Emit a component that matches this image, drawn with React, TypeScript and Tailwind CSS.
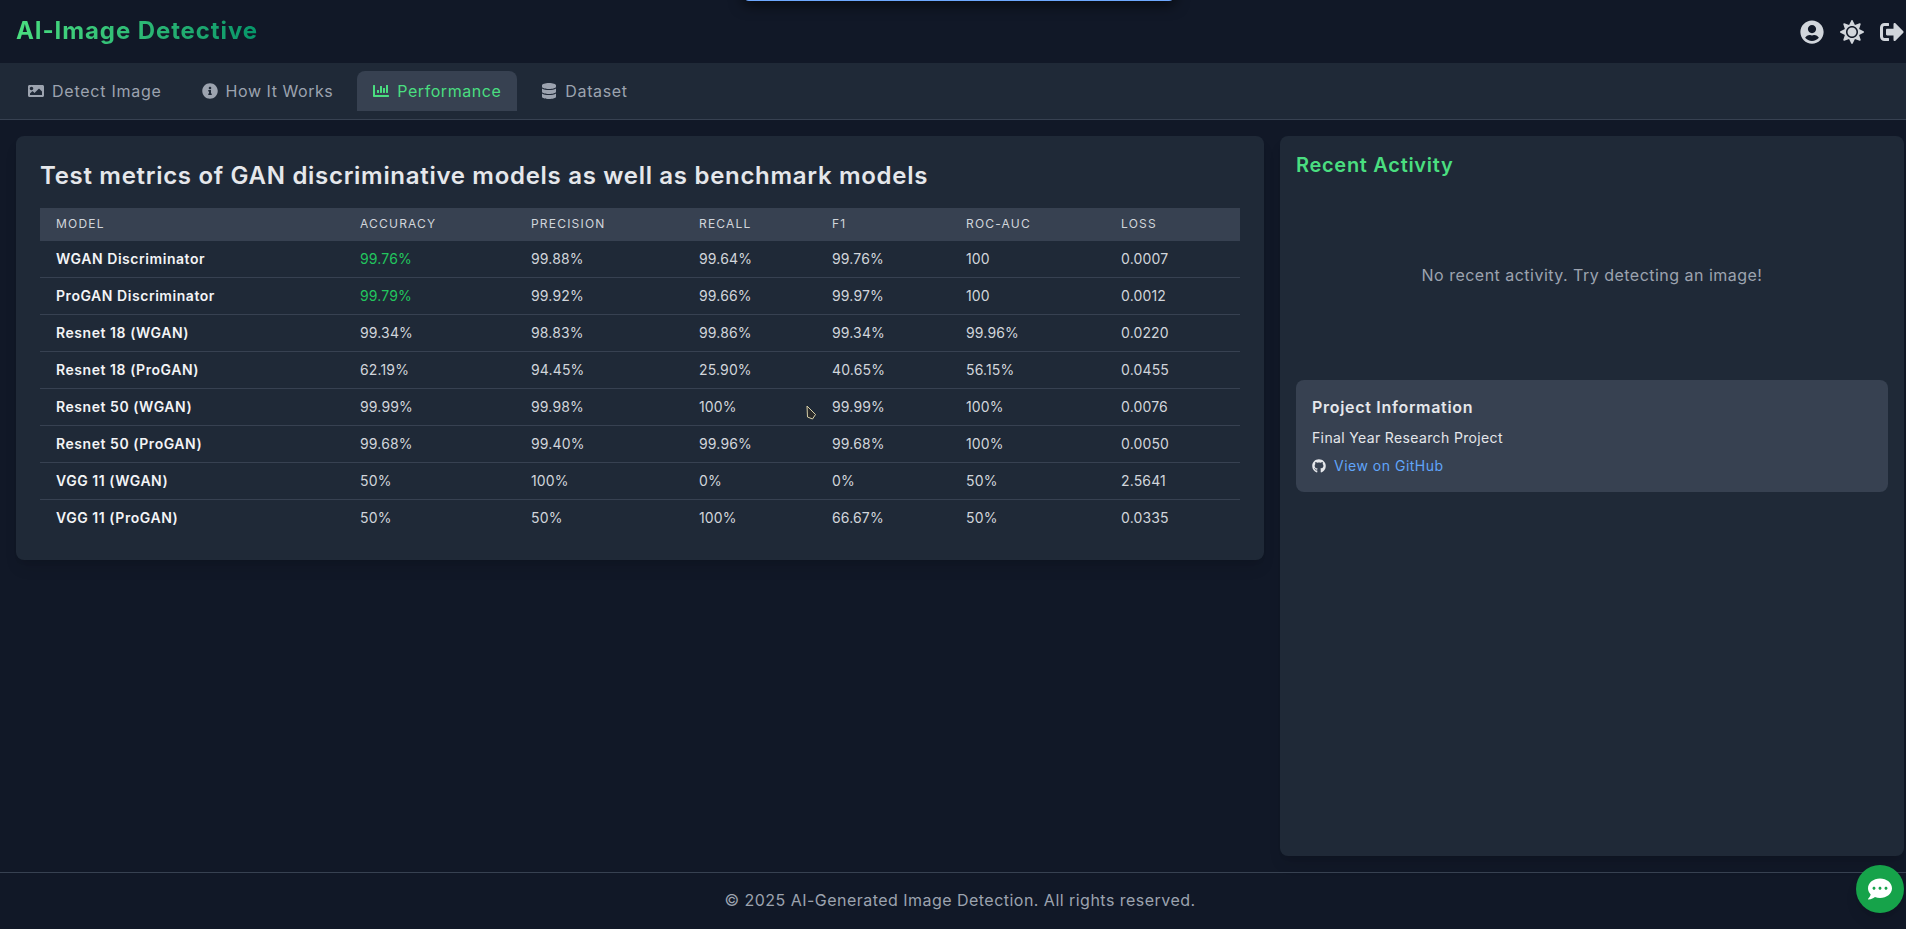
import { FaChartBar, FaCommentDots, FaDatabase, FaGithub, FaImage, FaInfoCircle, FaSignOutAlt, FaSun, FaUserCircle } from "react-icons/fa";

const columns = ["Model", "Accuracy", "Precision", "Recall", "F1", "ROC-AUC", "Loss"];

const rows = [
  ["WGAN Discriminator", "99.76%", "99.88%", "99.64%", "99.76%", "100", "0.0007"],
  ["ProGAN Discriminator", "99.79%", "99.92%", "99.66%", "99.97%", "100", "0.0012"],
  ["Resnet 18 (WGAN)", "99.34%", "98.83%", "99.86%", "99.34%", "99.96%", "0.0220"],
  ["Resnet 18 (ProGAN)", "62.19%", "94.45%", "25.90%", "40.65%", "56.15%", "0.0455"],
  ["Resnet 50 (WGAN)", "99.99%", "99.98%", "100%", "99.99%", "100%", "0.0076"],
  ["Resnet 50 (ProGAN)", "99.68%", "99.40%", "99.96%", "99.68%", "100%", "0.0050"],
  ["VGG 11 (WGAN)", "50%", "100%", "0%", "0%", "50%", "2.5641"],
  ["VGG 11 (ProGAN)", "50%", "50%", "100%", "66.67%", "50%", "0.0335"],
];

const tabs = [
  { name: "Detect Image", icon: FaImage, spacing: "tracking-[0.75px]" },
  { name: "How It Works", icon: FaInfoCircle, spacing: "tracking-[0.55px]" },
  { name: "Performance", icon: FaChartBar, spacing: "tracking-[0.55px]", active: true },
  { name: "Dataset", icon: FaDatabase, spacing: "tracking-[0.65px]" },
];

function MetricsTable() {
  return (
    <table className="w-[1200px] table-fixed border-collapse text-left">
      <colgroup>
        <col className="w-[304px]" />
        <col className="w-[171px]" />
        <col className="w-[168px]" />
        <col className="w-[133px]" />
        <col className="w-[134px]" />
        <col className="w-[155px]" />
        <col className="w-[135px]" />
      </colgroup>
      <thead>
        <tr className="border-b border-[#374151] bg-[#374151]">
          {columns.map((c) => (
            <th key={c} className="px-4 py-2 text-xs font-normal uppercase tracking-[1.2px] text-[#d1d5db]">
              {c}
            </th>
          ))}
        </tr>
      </thead>
      <tbody>
        {rows.map((row, r) => (
          <tr key={row[0]} className="border-b border-[#374151] last:border-b-0">
            {row.map((cell, i) => (
              <td
                key={i}
                className={
                  i === 0
                    ? "px-4 py-2 text-sm font-semibold tracking-[0.55px] text-[#f3f4f6]"
                    : i === 1 && r < 2
                      ? "px-4 py-2 text-sm tracking-[0.15px] text-[#22c55e]"
                      : "px-4 py-2 text-sm tracking-[0.15px] text-[#d1d5db]"
                }
              >
                {cell}
              </td>
            ))}
          </tr>
        ))}
      </tbody>
    </table>
  );
}

export default function App() {
  return (
    <div className="h-[929px] overflow-hidden bg-[#111827] font-['Inter',sans-serif]">
      <div className="relative flex h-full w-[1920px] flex-col">
        {/* toast sliding in at the top edge */}
        <div className="absolute left-[743px] top-[-40px] h-[41px] w-[432px] rounded-b-md border-b border-[#6ea8fe] bg-[#1f2937] shadow-[0_4px_14px_rgba(0,0,0,0.6)]" />

        <header className="flex h-[63px] items-center justify-between px-4 pb-[2px]">
          <h1 className="bg-gradient-to-r from-[#4ade80] to-[#059669] bg-clip-text text-2xl font-bold tracking-[0.9px] text-transparent">
            AI-Image Detective
          </h1>
          <div className="flex items-center gap-4 pt-[2px] text-[#d1d5db]">
            <FaUserCircle size={24} />
            <FaSun size={24} />
            <FaSignOutAlt size={24} />
          </div>
        </header>

        <nav className="flex gap-2 border-b border-[#374151] bg-[#1f2937] px-3 pb-2 pt-2">
          {tabs.map((t) => (
            <div
              key={t.name}
              className={`flex h-10 items-center gap-2 rounded-t-lg px-4 font-normal ${t.spacing} ${
                t.active ? "bg-[#374151] text-[#4ade80]" : "text-[#9ca3af]"
              }`}
            >
              <t.icon size={16} />
              {t.name}
            </div>
          ))}
        </nav>

        <main className="grid flex-1 grid-cols-[2fr_1fr] gap-4 p-4">
          <section className="self-start rounded-lg bg-[#1f2937] p-6 shadow-lg">
            <h2 className="mb-4 text-2xl font-semibold tracking-[0.7px] text-[#e5e7eb]">
              Test metrics of GAN discriminative models as well as benchmark models
            </h2>
            <MetricsTable />
          </section>

          <aside className="rounded-lg bg-[#1f2937] p-4 shadow-lg">
            <h2 className="mb-[18px] text-xl font-semibold leading-[26px] tracking-[0.7px] text-[#4ade80]">
              Recent Activity
            </h2>
            <p className="pb-[93px] pt-[67px] text-center tracking-[0.48px] text-[#9ca3af]">
              No recent activity. Try detecting an image!
            </p>
            <div className="rounded-lg bg-[#374151] p-4">
              <h3 className="mb-[10px] font-semibold leading-[22px] tracking-[0.7px] text-[#e5e7eb]">Project Information</h3>
              <p className="text-sm tracking-[0.36px] text-[#e5e7eb]">Final Year Research Project</p>
              <div className="mt-2 flex items-center gap-2 text-sm">
                <FaGithub size={14} className="text-[#e5e7eb]" />
                <span className="tracking-[0.5px] text-[#60a5fa]">View on GitHub</span>
              </div>
            </div>
          </aside>
        </main>

        <footer className="flex h-[57px] items-center justify-center border-t border-[#374151] pb-[2px] tracking-[0.47px] text-[#9ca3af]">
          © 2025 AI-Generated Image Detection. All rights reserved.
        </footer>

        <div className="absolute bottom-4 right-4 flex h-12 w-12 items-center justify-center rounded-full bg-[#16a34a] text-white shadow-lg">
          <FaCommentDots size={24} />
        </div>

        {/* mouse pointer caught in the capture */}
        <svg className="absolute left-[806px] top-[405px]" width="11" height="16" viewBox="0 0 11 16">
          <path d="M1 1 L9.5 9.5 L6.5 14 L1.5 12 Z" fill="#2a2a2a" stroke="#d8d0a8" strokeWidth="1" />
        </svg>
      </div>
    </div>
  );
}
